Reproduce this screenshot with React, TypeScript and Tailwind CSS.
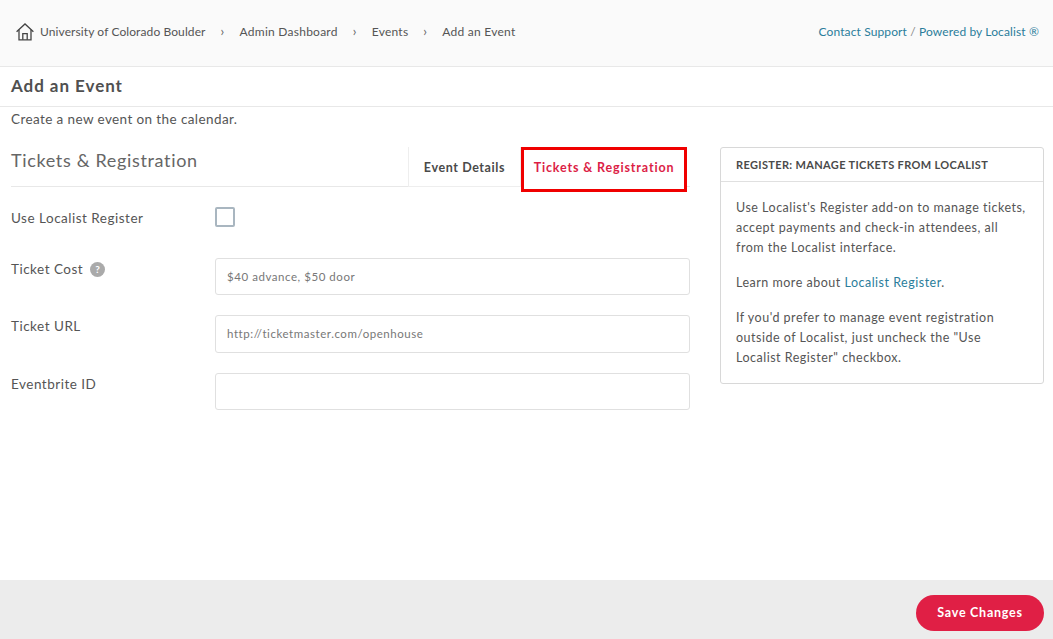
const font = "font-['Lato','Noto_Sans',sans-serif]";

function HomeIcon() {
  return (
    <svg width="18" height="18" viewBox="0 0 18 18" fill="none" stroke="#444" strokeWidth="1.3">
      <path d="M0.6 8.8 L9 1 L17.4 8.8" />
      <path d="M3 6.8 V16.8 H15 V6.8" />
      <path d="M6.8 16.8 V10.6 H11.2 V16.8" />
    </svg>
  );
}

function Crumb({ children }: { children: string }) {
  return <span className="text-[12px] tracking-[0.25px] text-[#555]">{children}</span>;
}

function Sep() {
  return <span className="w-[4px] text-[13px] leading-[13px] text-[#666] -mt-[2px]">›</span>;
}

function Field({ label, placeholder, help, tall }: { label: string; placeholder?: string; help?: boolean; tall?: boolean }) {
  return (
    <div className="flex items-start">
      <div className="w-[204px] flex items-center gap-[7px] pt-[2px] text-[13.5px] tracking-[0.5px] text-[#555] h-[20px]">
        {label}
        {help && (
          <span className="w-[15px] h-[15px] rounded-full bg-[#aaa] text-white text-[10px] font-bold flex items-center justify-center">?</span>
        )}
      </div>
      <div className={`w-[475px] ${tall ? "h-[38px]" : "h-[37px]"} border border-[#e0e0e0] rounded-[3px] px-[11px] flex items-center text-[11.5px] tracking-[0.55px] text-[#777]`}>
        {placeholder}
      </div>
    </div>
  );
}

export default function App() {
  return (
    <div className={`${font} w-[1053px] h-[639px] bg-white flex flex-col overflow-hidden text-[#555]`}>
      <header className="h-[67px] shrink-0 bg-[#fafafa] border-b border-[#e8e8e8] flex items-center justify-between pl-4 pr-[14px] pb-[2px]">
        <div className="flex items-center">
          <HomeIcon />
          <div className="ml-[6px] flex items-center gap-[15px]">
            <span className="text-[12px] tracking-[0.1px] text-[#555]">University of Colorado Boulder</span>
            <Sep />
            <Crumb>Admin Dashboard</Crumb>
            <Sep />
            <Crumb>Events</Crumb>
            <Sep />
            <Crumb>Add an Event</Crumb>
          </div>
        </div>
        <div className="text-[12px] tracking-[0.12px] text-[#2b7d9b]">
          Contact Support <span className="text-[#888]">/</span> Powered by Localist ®
        </div>
      </header>

      <div className="h-[40px] shrink-0 border-b border-[#e8e8e8] flex items-center px-[11px] pb-[2px]">
        <h1 className="text-[17px] font-bold tracking-[0.95px] text-[#505050]">Add an Event</h1>
      </div>

      <div className="flex-1 flex justify-between pl-[11px] pr-[9px]">
        <main className="w-[679px]">
          <p className="mt-[3px] text-[13.5px] tracking-[0.4px] leading-[18px] text-[#555]">Create a new event on the calendar.</p>
          <div className="mt-[19px] flex h-[40px] border-b border-[#e8e8e8] pr-[3px]">
            <h2 className="flex-1 text-[18px] tracking-[0.66px] leading-[26px] text-[#666]">Tickets &amp; Registration</h2>
            <div className="w-[113px] h-[40px] border-l border-r border-b border-[#eee] flex items-center justify-center pt-[3px] text-[12.5px] font-bold tracking-[0.6px] text-[#4a4a4a] bg-white">
              Event Details
            </div>
            <div className="relative w-[166px] h-[40px] flex items-center justify-center pt-[2px] text-[12.5px] font-bold tracking-[0.85px] text-[#dc1e46] bg-white">
              Tickets &amp; Registration
              <div className="absolute left-0 top-0 w-[166px] h-[45px] border-[3px] border-[#f00000]" />
            </div>
          </div>

          <div className="mt-[21px] flex items-start h-[40px]">
            <div className="w-[204px] text-[13.5px] tracking-[0.5px]">Use Localist Register</div>
            <div className="w-5 h-5 -mt-[1px] border-2 border-[#a9b6c0] rounded-[2px]" />
          </div>
          <div className="mt-[10px] flex flex-col gap-[20px]">
            <Field label="Ticket Cost" placeholder="$40 advance, $50 door" help />
            <Field label="Ticket URL" placeholder="http://ticketmaster.com/openhouse" tall />
            <Field label="Eventbrite ID" />
          </div>
        </main>

        <aside className="w-[324px] h-[237px] mt-[40px] border border-[#d8d8d8] rounded-[3px]">
          <div className="h-[34px] border-b border-[#e0e0e0] flex items-center px-[15px] pt-[2px] text-[11px] font-bold tracking-[0.35px] text-[#4a4a4a]">
            REGISTER: MANAGE TICKETS FROM LOCALIST
          </div>
          <div className="px-[15px] pt-[16px] text-[12.5px] tracking-[0.5px] leading-[20px] text-[#555]">
            <p>Use Localist's Register add-on to manage tickets, accept payments and check-in attendees, all from the Localist interface.</p>
            <p className="mt-[15px]">Learn more about <span className="text-[#2b7d9b]">Localist Register</span>.</p>
            <p className="mt-[15px]">If you'd prefer to manage event registration outside of Localist, just uncheck the "Use Localist Register" checkbox.</p>
          </div>
        </aside>
      </div>

      <footer className="h-[59px] shrink-0 bg-[#ececec] flex items-start justify-end pt-[15px] pr-[9px]">
        <div className="w-[128px] h-[36px] rounded-full bg-[#e01f45] text-white text-[12.5px] font-bold tracking-[0.75px] pt-[1px] flex items-center justify-center">
          Save Changes
        </div>
      </footer>
    </div>
  );
}
